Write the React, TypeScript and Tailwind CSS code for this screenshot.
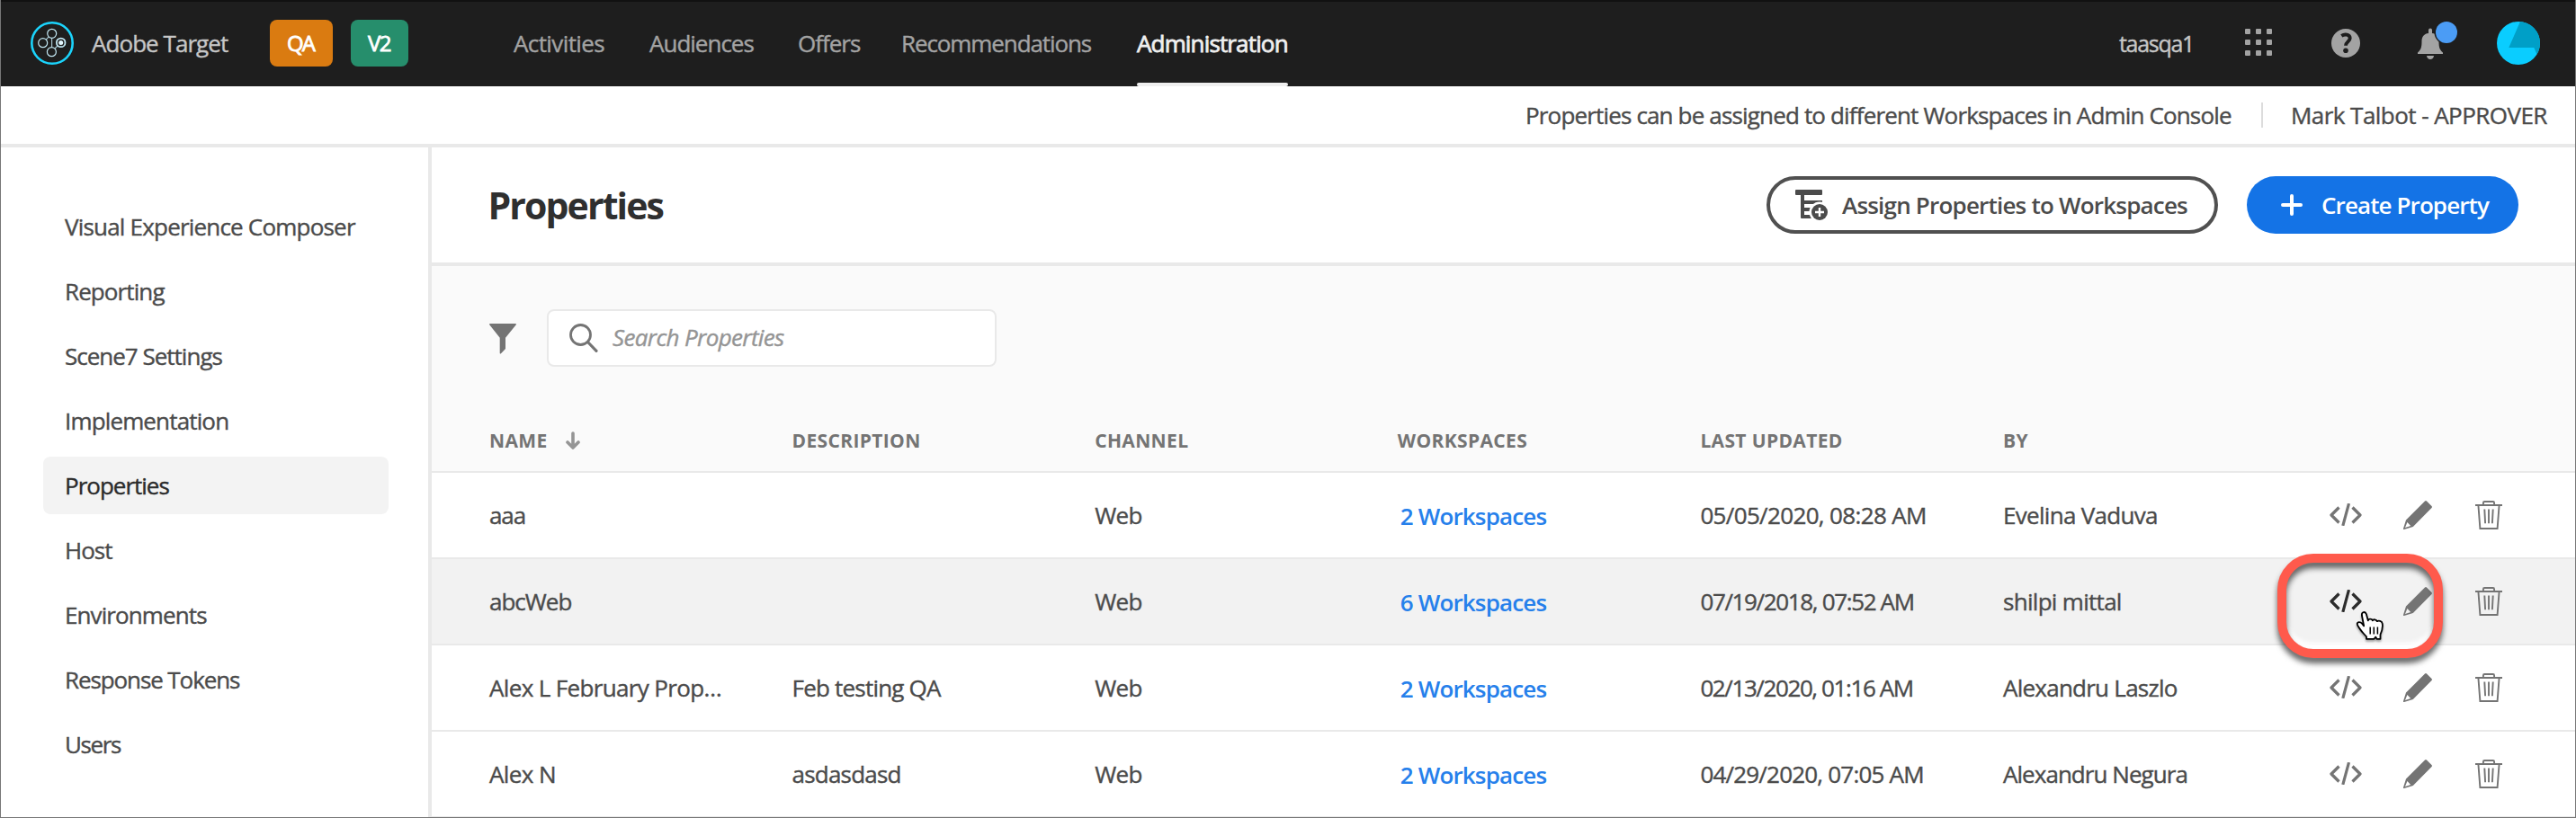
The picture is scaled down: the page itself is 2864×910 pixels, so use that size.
import type { ReactNode } from "react";

const nav = [
  { label: "Activities", cls: "w-[103px] tracking-[-0.6px]" },
  { label: "Audiences", cls: "w-[117px] tracking-[-1px]" },
  { label: "Offers", cls: "w-[67px] tracking-[-1px]" },
  { label: "Recommendations", cls: "w-[212px] tracking-[-1.1px]" },
];

const sidebar = [
  { label: "Visual Experience Composer", cls: "tracking-[-0.8px]" },
  { label: "Reporting", cls: "tracking-[-0.9px]" },
  { label: "Scene7 Settings", cls: "tracking-[-1px]" },
  { label: "Implementation", cls: "tracking-[-0.85px]" },
  { label: "Properties", cls: "tracking-[-1px] rounded-lg bg-[#f3f3f3] text-[#2c2c2c]" },
  { label: "Host", cls: "tracking-[-1px]" },
  { label: "Environments", cls: "tracking-[-0.9px]" },
  { label: "Response Tokens", cls: "tracking-[-1.1px]" },
  { label: "Users", cls: "tracking-[-1.4px]" },
];

type Row = {
  name: string;
  nameCls: string;
  description: string;
  workspaces: string;
  updated: string;
  dateCls: string;
  by: string;
  byCls: string;
  active?: boolean;
};

const rows: Row[] = [
  { name: "aaa", nameCls: "tracking-[-1.1px]", description: "", workspaces: "2 Workspaces", updated: "05/05/2020, 08:28 AM", dateCls: "tracking-[-0.65px]", by: "Evelina Vaduva", byCls: "tracking-[-0.7px]" },
  { name: "abcWeb", nameCls: "tracking-[-1px]", description: "", workspaces: "6 Workspaces", updated: "07/19/2018, 07:52 AM", dateCls: "tracking-[-1.35px]", by: "shilpi mittal", byCls: "tracking-[-0.7px]", active: true },
  { name: "Alex L February Prop…", nameCls: "tracking-[-0.65px]", description: "Feb testing QA", workspaces: "2 Workspaces", updated: "02/13/2020, 01:16 AM", dateCls: "tracking-[-1.4px]", by: "Alexandru Laszlo", byCls: "tracking-[-0.75px]" },
  { name: "Alex N", nameCls: "tracking-[-0.6px]", description: "asdasdasd", workspaces: "2 Workspaces", updated: "04/29/2020, 07:05 AM", dateCls: "tracking-[-0.8px]", by: "Alexandru Negura", byCls: "tracking-[-0.95px]" },
];

const columns = "grid grid-cols-[336.6px_336.6px_336.6px_336.6px_336.6px_1fr] items-center pl-16";

function TargetLogo() {
  return (
    <svg className="size-12 shrink-0" viewBox="0 0 48 48" fill="none">
      <circle cx="24" cy="24" r="22.7" stroke="#1bd3fb" strokeWidth="2.6" />
      <g stroke="#c4e9f5" strokeWidth="1.2">
        <path d="M17.2 20.2l3-3.3M23.6 18.5v10M27 30l3-3" strokeOpacity="0.8" />
        <circle cx="23.7" cy="13.3" r="5" />
        <circle cx="13.7" cy="23.7" r="5" />
        <circle cx="23.4" cy="33.7" r="5" />
      </g>
      <circle cx="33.7" cy="23.4" r="4.8" stroke="#c4e9f5" strokeWidth="1.8" />
      <circle cx="33.7" cy="23.4" r="2.5" fill="#e4f8ff" />
    </svg>
  );
}

function AppsIcon() {
  return (
    <svg className="mb-0.5 size-[30px]" viewBox="0 0 30 30" fill="#a3a3a3">
      {[0, 12, 24].map((y) => [0, 12, 24].map((x) => <rect key={`${x}-${y}`} x={x} y={y} width="6" height="6" rx="1" />))}
    </svg>
  );
}

function HelpIcon() {
  return (
    <svg className="size-8" viewBox="0 0 32 32">
      <circle cx="16" cy="16" r="16" fill="#a3a3a3" />
      <path d="M11.3 7.8c3.4-2.2 9.4-1.9 9.4 2.7 0 3.8-4.7 4.1-4.7 8.3" fill="none" stroke="#1e1e1e" strokeWidth="3.9" />
      <circle cx="16" cy="24.3" r="2.8" fill="#1e1e1e" />
    </svg>
  );
}

function BellIcon() {
  return (
    <svg className="h-12 w-11" viewBox="0 0 44 48">
      <path d="M12 13v-3.500a2 2 0 0 1 4 0V13c5.500.6 7.500 4.500 7.500 9 0 8 1.500 9.500 4.500 12.500V36H0v-1.500C3 31.500 4.500 30 4.500 22c0-4.500 2-8.400 7.500-9z" fill="#a3a3a3" />
      <path d="M10 38h8c-.5 5.300-7.500 5.300-8 0z" fill="#a3a3a3" />
      <circle cx="32" cy="12" r="13.5" fill="#1e1e1e" />
      <circle cx="32" cy="12" r="12" fill="#4b9cf5" />
    </svg>
  );
}

function Avatar() {
  return (
    <svg className="size-12 shrink-0" viewBox="0 0 48 48">
      <circle cx="24" cy="24" r="24" fill="#0acdff" />
      <path d="M26 .1 13.300 29h28l3.200 7.400A24 24 0 0 0 26 .1z" fill="#009fc7" />
    </svg>
  );
}

function AssignIcon() {
  return (
    <svg className="h-[34px] w-9" viewBox="0 0 36 34" fill="#4b4b4b">
      <rect width="30" height="6" rx="1" />
      <path d="M6 4h4v8h20v4H10v4h8v4h-8v4h8v4H7a1 1 0 0 1-1-1z" />
      <circle cx="27" cy="25" r="11.500" fill="#fff" />
      <circle cx="27" cy="25" r="9" />
      <path d="M27 20v10M22 25h10" stroke="#fff" strokeWidth="2.400" />
    </svg>
  );
}

function CodeIcon() {
  return (
    <svg className="mt-[-1px] h-[25px] w-9" viewBox="0 0 36 25" fill="none" stroke="currentColor" strokeWidth="3.2">
      <path d="M10.500 4.500 2 13l8.500 8.500M25.500 4.500 34 13l-8.500 8.500" strokeLinejoin="round" />
      <path d="M21.500.2 14.800 24.800" />
    </svg>
  );
}

function PencilIcon() {
  return (
    <svg className="size-8" viewBox="0 0 32 32" fill="currentColor">
      <path d="M24 .5a1.500 1.500 0 0 1 2 0L31.500 6a1.500 1.500 0 0 1 0 2L10.800 28.900.9 32c-.6.100-1-.4-.9-.9L3 21.600zM4.400 24 2 30.100 8.200 28z" fillRule="evenodd" />
    </svg>
  );
}

function TrashIcon() {
  return (
    <svg className="h-8 w-[30px]" viewBox="0 0 30 32" fill="none" stroke="currentColor" strokeWidth="1.900">
      <path d="M0 5h30M8.900 5V2.400A1.400 1.400 0 0 1 10.300 1h9.400a1.400 1.400 0 0 1 1.400 1.400V5M3.400 5l2 26h19.200l2-26M10.300 9.500l.8 15.800M15 9.500v15.800M19.700 9.500l-.8 15.800" />
    </svg>
  );
}

function HandCursor() {
  return (
    <svg className="absolute left-[77px] top-[53px] h-[36px] w-[33px] drop-shadow-[0_2px_1px_rgba(0,0,0,0.35)]" viewBox="0 0 33 36">
      <path
        d="M12 31.800v-2.500C9.500 26.500 6.500 23.500 4.500 20.300 3 18 1.700 16.200 1.700 15c.4-2.800 3.800-2.200 5-.7l2.500 3L6.900 5.500C6.500 1.500 10.800.8 11.900 4.300l1.900 7c.3-2.300 4.300-2.300 5 0 .9-1.700 4.300-1.300 5 .9 1.500-1.300 5.500-.5 5.900 2.400.7 4.300-.3 8.200-2.200 12.200v5h-4l-1.200-2.200-1.800 2.200z"
        fill="#fff"
        stroke="#000"
        strokeWidth="1.800"
        strokeLinejoin="round"
      />
      <path d="M16.200 18.500v8M20.300 18.500v8M24.400 18.500v8" stroke="#000" strokeWidth="1.500" />
    </svg>
  );
}

function HeaderCell({ children }: { children: ReactNode }) {
  return <div className="flex items-center gap-5">{children}</div>;
}

function TableRow({ row }: { row: Row }) {
  return (
    <div className={`${columns} relative h-24 border-b-2 border-[#e9e9e9] pb-px ${row.active ? "bg-[#f2f2f2]" : "bg-white"}`}>
      <div className={row.nameCls}>{row.name}</div>
      <div className="tracking-[-0.8px]">{row.description}</div>
      <div className="tracking-[-0.7px]">Web</div>
      <div className="pl-[3px] pt-[3px] font-semibold tracking-[-0.85px] text-[#2680eb] [-webkit-text-stroke:0]">{row.workspaces}</div>
      <div className={row.dateCls}>{row.updated}</div>
      <div className="flex items-center justify-between pr-[82px]">
        <span className={row.byCls}>{row.by}</span>
        <div className="flex items-center pt-px text-[#747474]">
          <span className={row.active ? "mr-[46px] text-[#2c2c2c]" : "mr-[46px]"}>
            <CodeIcon />
          </span>
          <span className="mr-12">
            <PencilIcon />
          </span>
          <TrashIcon />
        </div>
      </div>
      {row.active && (
        <div className="absolute right-[148px] top-[-6px] z-10 h-[116px] w-[184px]">
          <div className="absolute inset-2.5 rounded-[30px] shadow-[inset_0_-8px_5px_-1px_#fff]" />
          <div className="absolute inset-0 rounded-[40px] border-10 border-[#ff5a4c] drop-shadow-[0_6px_3px_rgba(0,0,0,0.6)]" />
          <div className="absolute left-[10px] top-[10px]">
            <HandCursor />
          </div>
        </div>
      )}
    </div>
  );
}

export default function App() {
  return (
    <div className="relative flex h-[910px] w-[2864px] flex-col overflow-hidden whitespace-nowrap bg-white font-['Open_Sans',sans-serif] text-[26px] leading-8 text-[#4b4b4b] [-webkit-text-stroke:0.4px_currentColor]">
      <header className="flex h-24 shrink-0 items-center border-t-2 border-[#111] bg-[#1e1e1e] pb-0.5 pl-[34px] pr-10 text-[#a3a3a3]">
        <TargetLogo />
        <div className="ml-5 w-[198px] tracking-[-0.95px] text-[#c6c6c6]">Adobe Target</div>
        <div className="flex h-[52px] w-[70px] items-center justify-center rounded-lg bg-[#da7b11] pr-0.5 text-[24px] tracking-[-2px] text-white [-webkit-text-stroke:0.8px_currentColor]">QA</div>
        <div className="ml-5 flex h-[52px] w-16 items-center justify-center rounded-lg bg-[#268e6c] pr-px text-[24px] tracking-[-1.5px] text-white [-webkit-text-stroke:0.8px_currentColor]">V2</div>
        <nav className="ml-[117px] flex gap-12">
          {nav.map((n) => (
            <div key={n.label} className={n.cls}>
              {n.label}
            </div>
          ))}
          <div className="relative ml-0.5 w-[168px] tracking-[-0.85px] text-[#efefef] [-webkit-text-stroke:0.8px_currentColor]">
            Administration
            <span className="absolute inset-x-0 bottom-[-32px] h-1 rounded-sm bg-[#efefef]" />
          </div>
        </nav>
        <div className="ml-auto w-[140px] text-[25px] tracking-[-1.3px] text-[#c6c6c6]">taasqa1</div>
        <div className="flex items-center">
          <AppsIcon />
          <div className="ml-[66px]">
            <HelpIcon />
          </div>
          <div className="ml-16 mr-11">
            <BellIcon />
          </div>
          <Avatar />
        </div>
      </header>

      <div className="flex h-[68px] shrink-0 items-center border-b-4 border-[#e9e9e9] pl-[1696px]">
        <span className="w-[818px] tracking-[-0.84px]">Properties can be assigned to different Workspaces in Admin Console</span>
        <span className="h-7 w-0.5 bg-[#dcdcdc]" />
        <span className="ml-[31px] tracking-[-0.55px]">Mark Talbot - APPROVER</span>
      </div>

      <div className="flex min-h-0 flex-1">
        <aside className="flex w-[480px] shrink-0 flex-col gap-2 border-r-4 border-[#e9e9e9] pl-12 pr-11 pt-14">
          {sidebar.map((s) => (
            <div key={s.label} className={`flex h-16 items-center pl-6 ${s.cls}`}>
              {s.label}
            </div>
          ))}
        </aside>

        <main className="flex flex-1 flex-col">
          <div className="flex h-[132px] shrink-0 items-center border-b-4 border-[#e9e9e9] pl-[62.5px] pr-16 [-webkit-text-stroke:0]">
            <h1 className="pb-px pt-0.5 text-[41px] font-bold leading-none tracking-[-1.9px] text-[#2f2f2f]">Properties</h1>
            <button className="ml-auto flex h-16 w-[502px] items-center rounded-full border-4 border-[#505050] pl-7 font-semibold tracking-[-0.8px]">
              <AssignIcon />
              <span className="ml-4">Assign Properties to Workspaces</span>
            </button>
            <button className="ml-8 flex h-16 w-[302px] items-center rounded-full bg-[#1473e6] pl-[38px] font-semibold tracking-[-0.9px] text-white">
              <svg className="size-6" viewBox="0 0 24 24" stroke="#fff" strokeWidth="4" strokeLinecap="round">
                <path d="M12 2v20M2 12h20" />
              </svg>
              <span className="ml-[21px]">Create Property</span>
            </button>
          </div>

          <div className="flex h-[230px] shrink-0 flex-col border-b-2 border-[#e9e9e9] bg-[#fafafa] pt-12">
            <div className="flex h-16 items-center pl-16">
              <svg className="mt-[1px] h-[34px] w-[30px]" viewBox="0 0 30 34" fill="#747474">
                <path d="M.8 0h28.400a.8.8 0 0 1 .6 1.300L18 15.700V28l-5 5.200a.7.7 0 0 1-1.300-.4V15.700L.2 1.300A.8.8 0 0 1 .8 0z" />
              </svg>
              <div className="ml-[34px] flex h-16 w-[500px] items-center rounded-lg border-2 border-[#e9e9e9] bg-white pl-[23px]">
                <svg className="size-8" viewBox="0 0 32 32" fill="none" stroke="#747474" strokeLinecap="round">
                  <circle cx="12.500" cy="12.500" r="11" strokeWidth="2.800" />
                  <path d="m20.500 20.500 9.500 9.800" strokeWidth="3.200" />
                </svg>
                <span className="ml-4 pb-0.5 italic tracking-[-0.65px] text-[#959595]">Search Properties</span>
              </div>
            </div>
            <div className={`${columns} mt-[66px] text-[21px] font-bold tracking-[0.35px] text-[#747474] [-webkit-text-stroke:0]`}>
              <HeaderCell>
                <span>NAME</span>
                <svg className="h-5 w-4" viewBox="0 0 16 20" fill="none" stroke="#959595" strokeWidth="3.600" strokeLinecap="round" strokeLinejoin="round">
                  <path d="M8 2v15M2 12l6 6 6-6" />
                </svg>
              </HeaderCell>
              <HeaderCell>DESCRIPTION</HeaderCell>
              <HeaderCell>CHANNEL</HeaderCell>
              <HeaderCell>WORKSPACES</HeaderCell>
              <HeaderCell>LAST UPDATED</HeaderCell>
              <HeaderCell>BY</HeaderCell>
            </div>
          </div>

          {rows.map((r) => (
            <TableRow key={r.name} row={r} />
          ))}
        </main>
      </div>

      <div className="pointer-events-none absolute inset-0 border-x border-b border-[#777]" />
    </div>
  );
}
